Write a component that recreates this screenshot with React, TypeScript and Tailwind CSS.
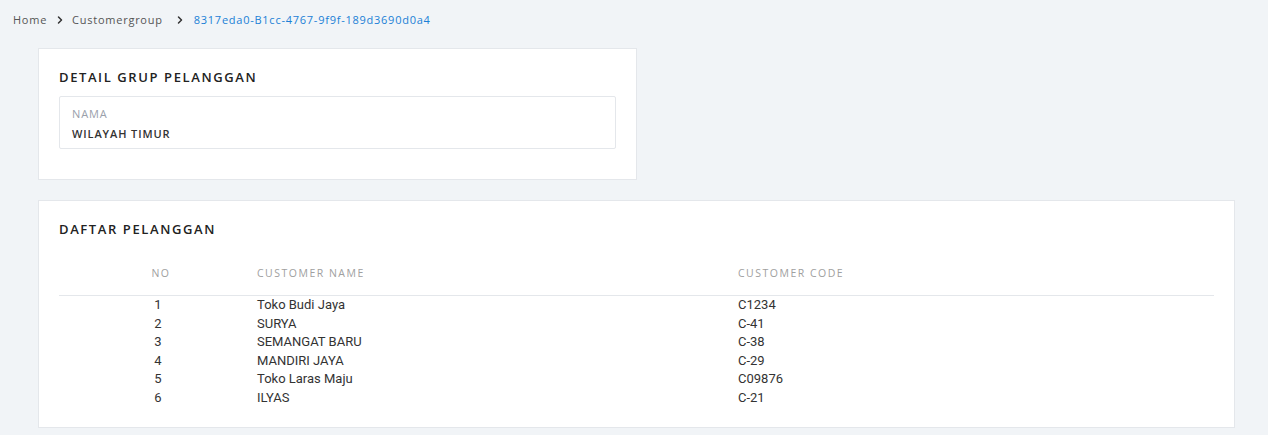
import { ChevronRight } from 'lucide-react';

const customers = [
  { no: 1, name: 'Toko Budi Jaya', code: 'C1234' },
  { no: 2, name: 'SURYA', code: 'C-41' },
  { no: 3, name: 'SEMANGAT BARU', code: 'C-38' },
  { no: 4, name: 'MANDIRI JAYA', code: 'C-29' },
  { no: 5, name: 'Toko Laras Maju', code: 'C09876' },
  { no: 6, name: 'ILYAS', code: 'C-21' },
];

const heading = "font-['Open_Sans',sans-serif]";

export default function App() {
  return (
    <div className="min-h-[435px] bg-[#f1f4f7] pb-2">
      <nav className={`${heading} flex items-center h-[40px] pl-[13px] text-[11px] tracking-[0.75px] text-[#555]`}>
        <span>Home</span>
        <ChevronRight className="w-3 h-3 ml-[7px] mr-[6px] text-[#333]" strokeWidth={3} />
        <span>Customergroup</span>
        <ChevronRight className="w-3 h-3 ml-[11px] mr-[8px] text-[#333]" strokeWidth={3} />
        <span className="text-[#1a80d6]">8317eda0-B1cc-4767-9f9f-189d3690d0a4</span>
      </nav>

      <div className="ml-[38px] mr-[33px] mt-[8px] space-y-[20px]">
        <section className="w-[599px] bg-white border border-[#e4e7eb] px-[20px] pt-[20px] pb-[30px]">
          <h2 className={`${heading} text-[13px] font-semibold tracking-[1.6px] text-[#222] leading-[17px]`}>
            DETAIL GRUP PELANGGAN
          </h2>
          <div className="mt-[10px] border border-[#e4e7eb] rounded-[2px] px-[12px] pt-[10px] pb-[7px]">
            <div className={`${heading} text-[11px] text-[#9aa0ab] tracking-[0.9px] leading-[14px]`}>NAMA</div>
            <div className={`${heading} mt-[6px] text-[11px] font-semibold text-[#333] tracking-[0.9px] leading-[14px]`}>
              WILAYAH TIMUR
            </div>
          </div>
        </section>

        <section className="bg-white border border-[#e4e7eb] px-[20px] pt-[20px] pb-[19px]">
          <h2 className={`${heading} text-[13px] font-semibold tracking-[1.6px] text-[#222] leading-[17px]`}>
            DAFTAR PELANGGAN
          </h2>
          <div className="mt-[20px]">
            <div
              className={`${heading} grid grid-cols-[198px_481px_1fr] h-[38px] items-start pt-[8px] border-b border-[#e4e7eb] text-[10.5px] tracking-[1.5px] text-[#a0a0a0]`}
            >
              <div className="text-center pl-[6px]">NO</div>
              <div>CUSTOMER NAME</div>
              <div>CUSTOMER CODE</div>
            </div>
            <div className="font-['Roboto',sans-serif] text-[13px] text-[#333]">
              {customers.map(c => (
                <div key={c.no} className="grid grid-cols-[198px_481px_1fr] h-[18.6px] leading-[18.6px]">
                  <div className="text-center">{c.no}</div>
                  <div>{c.name}</div>
                  <div>{c.code}</div>
                </div>
              ))}
            </div>
          </div>
        </section>
      </div>
    </div>
  );
}
